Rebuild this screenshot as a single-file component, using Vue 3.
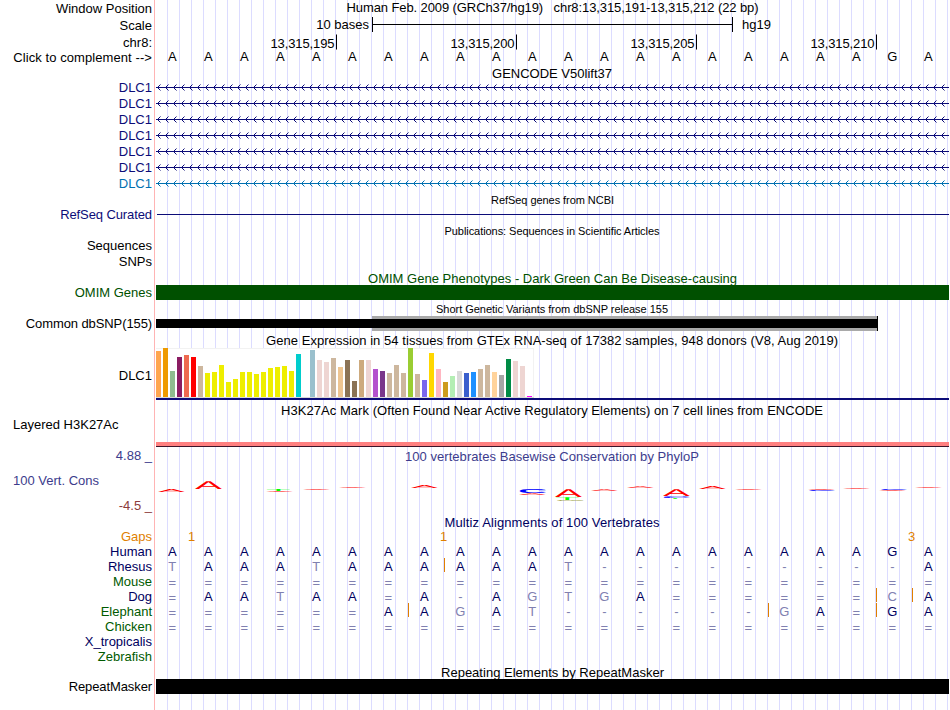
<script setup>
const LEFT = 156;
const WIDTH = 793;
const CENTER = 552;

const columnX = (i) => 172.3 + i * 36;
const view = (height) => `${LEFT} 0 ${WIDTH} ${height}`;

const ticks = [
  { x: 336, label: '13,315,195' },
  { x: 516, label: '13,315,200' },
  { x: 696, label: '13,315,205' },
  { x: 876, label: '13,315,210' }
];

const reference = 'AAAAAAAAAAAAAAAAAAAAGA';

const genes = ['navy', 'navy', 'navy', 'navy', 'navy', 'navy', 'azure'];

// one "<" every 8 pixels along the intron line
const arrows = Array.from({ length: 99 }, (_, i) => {
  const x = 157 + i * 8;
  return `M${x + 3.5} 4.5l-3 3l3 3`;
}).join('');

const tissues = [
  [46, '#ffa54f'], [49, '#ee9a00'], [26, '#8fbc8f'], [40, '#8b1c62'], [42, '#ee6a50'], [40, '#ff0000'],
  [31, '#cdb79e'], [24, '#eeee00'], [25, '#eeee00'], [32, '#eeee00'], [15, '#eeee00'], [18, '#eeee00'],
  [25, '#eeee00'], [25, '#eeee00'], [23, '#eeee00'], [25, '#eeee00'], [29, '#eeee00'], [30, '#eeee00'],
  [31, '#eeee00'], [26, '#eeee00'], [43, '#00cdcd'], [0, '#ee82ee'], [47, '#9ac0cd'], [37, '#eed5d2'],
  [35, '#eed5d2'], [39, '#cdb79e'], [30, '#eec591'], [37, '#8b7355'], [16, '#8b7355'], [37, '#cdaa7d'],
  [37, '#eed5d2'], [28, '#b452cd'], [26, '#7a378b'], [24, '#cdb79e'], [32, '#cdb79e'], [24, '#cdb79e'],
  [49, '#9acd32'], [23, '#cdb79e'], [17, '#7a67ee'], [44, '#ffd700'], [28, '#ffb6c1'], [15, '#cd9b1d'],
  [21, '#b4eeb4'], [26, '#d9d9d9'], [24, '#3a5fcd'], [25, '#1e90ff'], [28, '#cdb79e'], [32, '#cdb79e'],
  [25, '#ffd39b'], [22, '#a6a6a6'], [38, '#008b45'], [36, '#eed5d2'], [31, '#eed5d2'], [1, '#ff00ff']
];

// stretched letters of the conservation logo: base, left, baseline, height
const logo = [
  ['A', 158, 45, 3],
  ['A', 195, 42, 8],
  ['T', 266, 44, 2],
  ['A', 266, 45, 1],
  ['A', 303, 43, 1],
  ['A', 339, 41, 1],
  ['A', 411, 41, 3],
  ['C', 518, 46, 4],
  ['A', 519, 48, 1.7],
  ['A', 555, 50, 8],
  ['T', 555, 53, 2.8],
  ['G', 555, 54, 0.9],
  ['A', 591, 44, 1.7],
  ['A', 627, 41, 1.7],
  ['C', 662, 51, 1.8],
  ['A', 663, 49, 7],
  ['T', 663, 52, 0.9],
  ['A', 699, 42, 3],
  ['A', 735, 43, 1],
  ['A', 808, 43, 1],
  ['C', 807, 44, 1],
  ['A', 843, 42, 1],
  ['C', 879, 43, 1],
  ['A', 879, 44, 1],
  ['A', 915, 41, 1]
];

const species = [
  { name: 'Human', tone: 'ink', seq: reference, inserts: [] },
  { name: 'Rhesus', tone: 'ink', seq: 'TAAATAAAAAAT---------A', inserts: [444] },
  { name: 'Mouse', tone: 'green', seq: '======================', inserts: [] },
  { name: 'Dog', tone: 'ink', seq: '=AATAA=A-AGTGA======CA', inserts: [876, 912] },
  { name: 'Elephant', tone: 'green', seq: '======AAGAT------GA=GA', inserts: [408, 768, 876] },
  { name: 'Chicken', tone: 'green', seq: '======================', inserts: [] },
  { name: 'X_tropicalis', tone: 'ink', seq: '', inserts: [] },
  { name: 'Zebrafish', tone: 'green', seq: '', inserts: [] }
];
</script>

<template>
  <main class="browser">
    <section class="row h16">
      <div class="label drop1">Window Position</div>
      <svg class="track" :viewBox="view(16)">
        <text :x="CENTER + 0.5" y="12" class="mid" textLength="412">Human Feb. 2009 (GRCh37/hg19) &nbsp; chr8:13,315,191-13,315,212 (22 bp)</text>
      </svg>
    </section>

    <section class="row h17">
      <div class="label drop2">Scale</div>
      <svg class="track" :viewBox="view(17)">
        <text x="369" y="13" class="end">10 bases</text>
        <path d="M372 1h1v15h-1zM732 1h1v15h-1zM372 8h361v1h-361z" />
        <text x="742" y="13">hg19</text>
      </svg>
    </section>

    <section class="row h16">
      <div class="label drop2">chr8:</div>
      <svg class="track" :viewBox="view(16)">
        <g v-for="tick in ticks" :key="tick.x">
          <text :x="tick.x - 1.5" y="14" class="end" textLength="64">{{ tick.label }}</text>
          <rect :x="tick.x" y="1" width="1" height="15" />
        </g>
      </svg>
    </section>

    <section class="row h16">
      <div class="label drop1 wide">Click to complement --&gt;</div>
      <svg class="track" :viewBox="view(16)">
        <text v-for="(base, i) in reference" :key="i" :x="columnX(i)" y="12" class="mid">{{ base }}</text>
      </svg>
    </section>

    <section class="row h15">
      <div class="label"></div>
      <svg class="track" :viewBox="view(15)">
        <text :x="CENTER" y="13" class="mid">GENCODE V50lift37</text>
      </svg>
    </section>

    <section v-for="(tone, i) in genes" :key="i" class="row h16" :class="tone">
      <div class="label">DLC1</div>
      <svg class="track" :viewBox="view(16)">
        <rect x="156" y="7" width="793" height="1" />
        <path class="arrows" :d="arrows" />
      </svg>
    </section>

    <section class="row h15">
      <div class="label"></div>
      <svg class="track" :viewBox="view(15)">
        <text :x="CENTER + 0.5" y="12" class="mid small" textLength="123">RefSeq genes from NCBI</text>
      </svg>
    </section>

    <section class="row h16 navy">
      <div class="label tight">RefSeq Curated</div>
      <svg class="track" :viewBox="view(16)">
        <rect x="157" y="7" width="792" height="1" />
      </svg>
    </section>

    <section class="row h15">
      <div class="label"></div>
      <svg class="track" :viewBox="view(15)">
        <text :x="CENTER" y="12" class="mid small" textLength="215">Publications: Sequences in Scientific Articles</text>
      </svg>
    </section>

    <section class="row h16">
      <div class="label">Sequences</div>
    </section>
    <section class="row h16">
      <div class="label">SNPs</div>
    </section>

    <section class="row h15 omim">
      <div class="label"></div>
      <svg class="track" :viewBox="view(15)">
        <text :x="CENTER + 0.5" y="13" class="mid" textLength="369">OMIM Gene Phenotypes - Dark Green Can Be Disease-causing</text>
      </svg>
    </section>

    <section class="row h16 omim">
      <div class="label">OMIM Genes</div>
      <svg class="track" :viewBox="view(16)">
        <rect class="omim-bar" x="156" y="0" width="793" height="15" />
      </svg>
    </section>

    <section class="row h15">
      <div class="label"></div>
      <svg class="track" :viewBox="view(15)">
        <text :x="CENTER" y="12" class="mid small" textLength="232">Short Genetic Variants from dbSNP release 155</text>
      </svg>
    </section>

    <section class="row h16">
      <div class="label tight">Common dbSNP(155)</div>
      <svg class="track" :viewBox="view(16)">
        <rect class="snp-range" x="372" y="0" width="505" height="15" />
        <rect x="156" y="3" width="722" height="9" />
        <rect x="877" y="0" width="1" height="15" />
      </svg>
    </section>

    <section class="row h16">
      <div class="label"></div>
      <svg class="track" :viewBox="view(16)">
        <text :x="CENTER" y="13" class="mid" textLength="572">Gene Expression in 54 tissues from GTEx RNA-seq of 17382 samples, 948 donors (V8, Aug 2019)</text>
      </svg>
    </section>

    <section class="row h52">
      <div class="label drop20">DLC1</div>
      <svg class="track" :viewBox="view(52)">
        <rect class="chart-edge" x="156" y="0" width="378" height="50" />
        <rect class="chart-back" x="156" y="1" width="377" height="48" />
        <rect class="chart-base" x="156" y="49" width="378" height="1" />
        <rect
          v-for="([height, color], i) in tissues"
          :key="i"
          :x="156 + i * 7"
          :y="49 - height"
          width="5"
          :height="height"
          :fill="color"
        />
        <rect class="gene-line" x="156" y="50" width="793" height="2" />
      </svg>
    </section>

    <section class="row h17">
      <div class="label"></div>
      <svg class="track" :viewBox="view(17)">
        <text :x="CENTER" y="15" class="mid" textLength="542">H3K27Ac Mark (Often Found Near Active Regulatory Elements) on 7 cell lines from ENCODE</text>
      </svg>
    </section>

    <section class="row h30">
      <div class="label left">Layered H3K27Ac</div>
      <svg class="track" :viewBox="view(30)">
        <rect class="signal" x="156" y="25" width="793" height="4" />
        <rect class="signal-base" x="156" y="29" width="793" height="1" />
      </svg>
    </section>

    <section class="row h67 cons">
      <div class="label stack">
        <span>4.88 _</span>
        <span class="name">100 Vert. Cons</span>
        <span class="low">-4.5 _</span>
      </div>
      <svg class="track" :viewBox="view(67)">
        <text :x="CENTER" y="14" class="mid" textLength="294">100 vertebrates Basewise Conservation by PhyloP</text>
        <text
          v-for="([base, x, y, height], i) in logo"
          :key="i"
          :class="['logo', base]"
          :transform="`translate(${x} ${y}) scale(3.1 ${height / 9.2})`"
        >{{ base }}</text>
      </svg>
    </section>

    <section class="row h15 ink">
      <div class="label"></div>
      <svg class="track" :viewBox="view(15)">
        <text :x="CENTER" y="13" class="mid" textLength="215">Multiz Alignments of 100 Vertebrates</text>
      </svg>
    </section>

    <section class="row h15 gaps">
      <div class="label">Gaps</div>
      <svg class="track" :viewBox="view(15)">
        <text x="191.5" y="12" class="mid">1</text>
        <text x="443.5" y="12" class="mid">1</text>
        <text x="911.5" y="12" class="mid">3</text>
      </svg>
    </section>

    <section v-for="row in species" :key="row.name" class="row h15" :class="row.tone">
      <div class="label">{{ row.name }}</div>
      <svg class="track" :viewBox="view(15)">
        <text
          v-for="(base, i) in row.seq"
          :key="i"
          :x="columnX(i)"
          :y="base === '=' ? 13 : 12"
          class="mid base"
          :class="{ differs: base !== reference[i] }"
        >{{ base }}</text>
        <rect v-for="x in row.inserts" :key="x" class="insert" :x="x" y="-1" width="1" height="14" />
      </svg>
    </section>

    <section class="row h15">
      <div class="label"></div>
      <svg class="track" :viewBox="view(15)">
        <text :x="CENTER + 0.5" y="13" class="mid" textLength="223">Repeating Elements by RepeatMasker</text>
      </svg>
    </section>

    <section class="row h16">
      <div class="label tight">RepeatMasker</div>
      <svg class="track" :viewBox="view(16)">
        <rect x="156" y="0" width="793" height="15" />
      </svg>
    </section>
  </main>
</template>

<style>
body {
  margin: 0;
  background: #fff;
}
</style>

<style scoped>
.browser {
  width: 949px;
  height: 710px;
  overflow: hidden;
  color: #000;
  font-family: "Liberation Sans", Arial, Helvetica, sans-serif;
  font-size: 13px;
  line-height: 15px;
  background-image:
    linear-gradient(#ffb4b4, #ffb4b4),
    repeating-linear-gradient(to right, #dcdcff 0 1px, transparent 1px 12px);
  background-repeat: no-repeat;
  background-size: 1px 100%, 782px 100%;
  background-position: 154px 0, 167px 0;
}

.row {
  display: grid;
  grid-template-columns: 154px 793px;
  column-gap: 2px;
}

.h15 { height: 15px; }
.h16 { height: 16px; }
.h17 { height: 17px; }
.h30 { height: 30px; }
.h52 { height: 52px; }
.h67 { height: 67px; }

.label {
  padding-right: 2px;
  text-align: right;
  white-space: nowrap;
}

.label.left {
  padding-left: 13px;
  text-align: left;
}

.wide { letter-spacing: 0.08px; }
.tight { letter-spacing: -0.1px; }

.drop1 { padding-top: 1px; }
.drop2 { padding-top: 2px; }
.drop20 { padding-top: 20px; }

.track {
  display: block;
  width: 793px;
  height: 100%;
  overflow: visible;
  fill: currentColor;
}

.mid { text-anchor: middle; }
.end { text-anchor: end; }
.small { font-size: 11px; }

.navy { color: #0c0c78; }
.azure { color: #0070b0; }
.omim { color: #005000; }
.ink { color: #000060; }
.green { color: #005a00; }
.gaps { color: #e08000; }
.cons { color: #3c3c8c; }

.arrows {
  fill: none;
  stroke: currentColor;
  stroke-width: 1;
}

.omim-bar { fill: #005000; }
.snp-range { fill: #a9a9a9; }
.chart-edge { fill: #f2f2f2; }
.chart-back { fill: #fff; }
.chart-base { fill: #d8d8d8; }
.gene-line { fill: #0c0c78; }
.signal { fill: #ff8080; }
.signal-base { fill: #3c1428; }

.stack {
  display: flex;
  flex-direction: column;
  align-items: flex-end;
  padding-top: 1px;
}

.stack .name {
  align-self: flex-start;
  margin: 10px 0;
  padding-left: 13px;
}

.stack .low { color: #8c3c3c; }

.logo { text-rendering: geometricPrecision; }
.logo.A { fill: #ff0000; }
.logo.C {
  fill: #0000ff;
  font-weight: bold;
}
.logo.T { fill: #00ff00; }
.logo.G { fill: #808000; }

.base { fill: #000060; }
.base.differs { fill: #8080b0; }
.insert { fill: #e08000; }
</style>
